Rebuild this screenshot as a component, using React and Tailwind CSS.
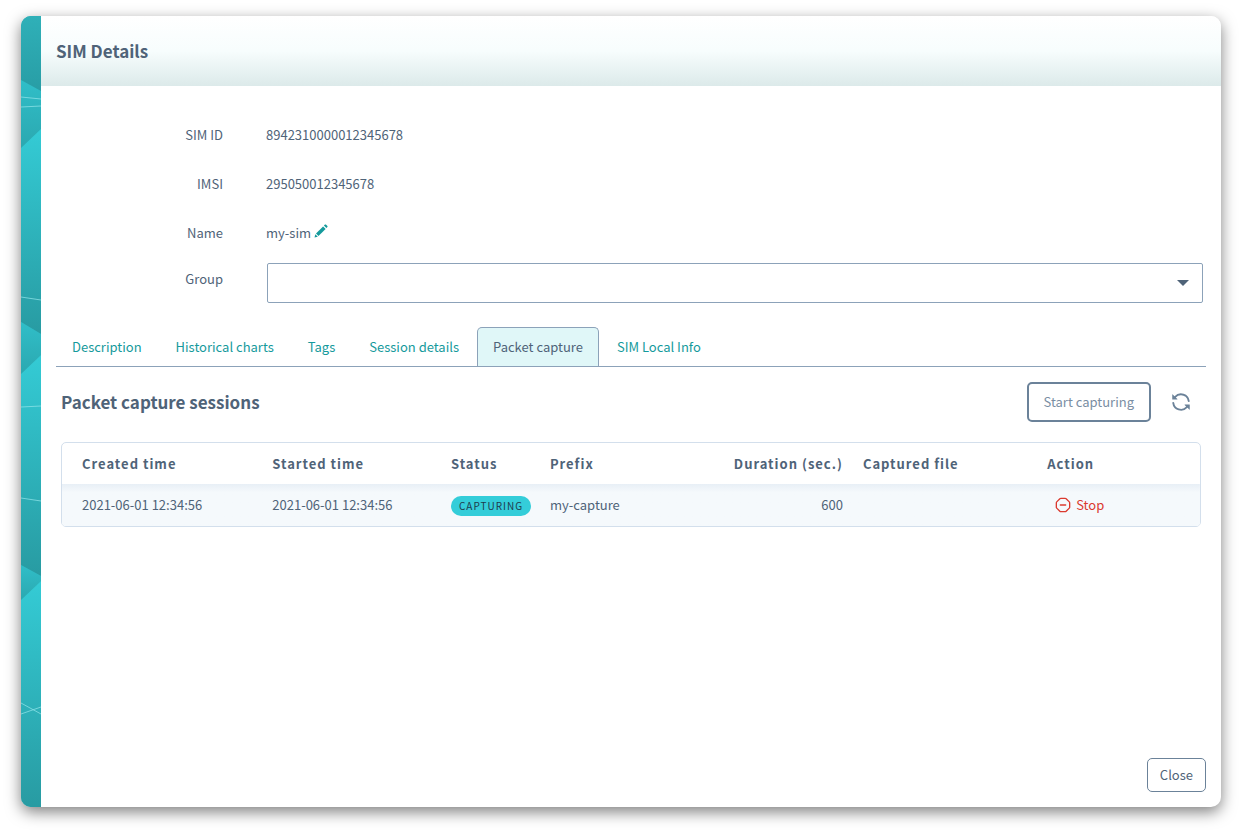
import { OctagonMinus } from "lucide-react";

const tabs = [
    "Description",
    "Historical charts",
    "Tags",
    "Session details",
    "Packet capture",
    "SIM Local Info",
];

const sessions = [
    {
        created: "2021-06-01 12:34:56",
        started: "2021-06-01 12:34:56",
        status: "CAPTURING",
        prefix: "my-capture",
        duration: 600,
        file: "",
    },
];

// Decorative faceted strip on the left edge of the dialog
function SideStrip() {
    return (
        <div className="w-5 shrink-0 bg-[#2ba8b0]">
            <svg className="block h-full w-5" viewBox="0 0 20 791" preserveAspectRatio="none" aria-hidden="true">
                <defs>
                    <linearGradient id="top" x1="0" y1="0" x2="0" y2="1">
                        <stop offset="0" stopColor="#2fb0b8" />
                        <stop offset="1" stopColor="#289da5" />
                    </linearGradient>
                    <linearGradient id="mid" x1="0" y1="0" x2="0" y2="1">
                        <stop offset="0" stopColor="#30bec8" />
                        <stop offset="1" stopColor="#2ba8b0" />
                    </linearGradient>
                    <linearGradient id="bright" x1="0" y1="0" x2="0" y2="1">
                        <stop offset="0" stopColor="#34cbd5" />
                        <stop offset="1" stopColor="#289ba2" />
                    </linearGradient>
                </defs>
                <path d="M0 0H20V76H0Z" fill="url(#top)" />
                <path d="M0 64L20 75V114L0 132Z" fill="url(#mid)" />
                <path d="M0 132L20 113V318L0 306Z" fill="url(#bright)" />
                <path d="M0 306L20 318V339L0 358Z" fill="url(#mid)" />
                <path d="M0 358L20 339V560L0 549Z" fill="url(#bright)" />
                <path d="M0 549L20 560V565L0 584Z" fill="url(#mid)" />
                <path d="M0 584L20 565V791H0Z" fill="url(#bright)" />
                <g stroke="#8fe3e8" strokeOpacity="0.75" fill="none">
                    <path d="M0 81L20 83M0 91L20 90" />
                    <path d="M0 281L20 284M0 391L20 390" />
                    <path d="M0 482L20 485" />
                    <path d="M0 687L20 698M0 698L20 691" />
                </g>
            </svg>
        </div>
    );
}

function PencilIcon() {
    return (
        <svg className="h-3.5 w-3.5" viewBox="0 0 14 14" fill="#159a9c" aria-hidden="true">
            <path d="M0.5 13.5L1.3 10.2L3.8 12.7Z" />
            <path d="M2 9.5L9.1 2.4L11.6 4.9L4.5 12Z" />
            <path d="M9.9 1.6L11 0.6Q11.4 0.2 11.9 0.6L13.4 2.1Q13.8 2.6 13.4 3.1L12.4 4.1Z" />
        </svg>
    );
}

function SyncIcon() {
    return (
        <svg className="h-5 w-5" viewBox="0 0 16 16" fill="currentColor" aria-hidden="true">
            <path d="M1.705 8.005a.75.75 0 0 1 .834.656 5.5 5.5 0 0 0 9.592 2.97l-1.204-1.204a.25.25 0 0 1 .177-.427h3.646a.25.25 0 0 1 .25.25v3.646a.25.25 0 0 1-.427.177l-1.38-1.38A7.002 7.002 0 0 1 1.05 8.84a.75.75 0 0 1 .656-.834ZM8 2.5a5.487 5.487 0 0 0-4.131 1.869l1.204 1.204A.25.25 0 0 1 4.896 6H1.25A.25.25 0 0 1 1 5.75V2.104a.25.25 0 0 1 .427-.177l1.38 1.38A7.002 7.002 0 0 1 14.95 7.16a.75.75 0 0 1-1.49.178A5.5 5.5 0 0 0 8 2.5Z" />
        </svg>
    );
}

function FormRow({ label, children }) {
    return (
        <div className="flex h-[49px] items-center">
            <span className="w-[167px] shrink-0 text-right">{label}</span>
            <div className="ml-[43px] flex items-center gap-[3px]">{children}</div>
        </div>
    );
}

export default function App() {
    return (
        <div className="flex min-h-screen bg-white px-[21px] pt-4 pb-[26px] font-['Noto_Sans_CJK_JP',sans-serif] text-[13px] leading-5 text-[#4f6378]">
            <div
                role="dialog"
                aria-labelledby="dialog-title"
                className="flex flex-1 overflow-hidden rounded-[10px] bg-white shadow-[0_5px_15px_rgba(0,0,0,0.5)]"
            >
                <SideStrip />

                <div className="flex min-w-0 flex-1 flex-col">
                    <header className="flex h-[70px] items-center bg-linear-to-b from-white via-[#f7fdfd] to-[#dceaea] px-[15px]">
                        <h1 id="dialog-title" className="text-[17px] leading-6 font-bold">SIM Details</h1>
                    </header>

                    <div className="flex flex-1 flex-col p-[15px] pt-6">
                        {/* SIM summary */}
                        <FormRow label="SIM ID">8942310000012345678</FormRow>
                        <FormRow label="IMSI">295050012345678</FormRow>
                        <FormRow label="Name">
                            my-sim
                            <button type="button" aria-label="Edit name" className="mb-1">
                                <PencilIcon />
                            </button>
                        </FormRow>
                        <div className="mt-1.5 flex">
                            <label htmlFor="group" className="w-[167px] shrink-0 pt-1.5 text-right">Group</label>
                            <div className="relative mr-[3px] ml-11 flex-1">
                                <select
                                    id="group"
                                    className="block h-10 w-full appearance-none rounded-xs border border-[#8ca2b9] bg-white px-3"
                                >
                                    <option value=""></option>
                                </select>
                                <svg
                                    className="pointer-events-none absolute top-[17px] right-3.5 h-1.5 w-3"
                                    viewBox="0 0 12 6"
                                    fill="#4f6378"
                                    aria-hidden="true"
                                >
                                    <path d="M0 0H12L6 6Z" />
                                </svg>
                            </div>
                        </div>

                        {/* Tabs */}
                        <nav className="mt-6 flex gap-0.5 border-b border-[#8ca2b9]">
                            {tabs.map((tab) => (
                                <a
                                    key={tab}
                                    href="#"
                                    className={
                                        tab === "Packet capture"
                                            ? "rounded-t-[5px] border border-b-0 border-[#8ca2b9] bg-[#e0f7f8] px-[15px] py-[9px]"
                                            : "border border-b-0 border-transparent px-[15px] py-[9px] text-[#159a9c]"
                                    }
                                >
                                    {tab}
                                </a>
                            ))}
                        </nav>

                        {/* Capture sessions */}
                        <section className="px-[5px] pt-[15px]">
                            <div className="flex items-center">
                                <h2 className="flex-1 text-[17px] leading-6 font-bold">Packet capture sessions</h2>
                                <button
                                    type="button"
                                    className="h-10 rounded-[5px] border-2 border-[#6b8299] px-[15px] text-[#7a8ea3]"
                                >
                                    Start capturing
                                </button>
                                <button type="button" aria-label="Refresh" className="mr-2.5 ml-5 text-[#6b8299]">
                                    <SyncIcon />
                                </button>
                            </div>

                            <div className="mt-5 overflow-hidden rounded-[5px] border border-[#d3dfec]">
                                <table className="w-full table-fixed text-left">
                                    <thead>
                                        <tr className="h-[41px] tracking-[1px]">
                                            <th className="w-[17.6%] pr-2.5 pl-5">Created time</th>
                                            <th className="w-[15.7%] px-2.5">Started time</th>
                                            <th className="w-[8.7%] px-2.5">Status</th>
                                            <th className="w-[15%] px-2.5">Prefix</th>
                                            <th className="w-[12.5%] px-2.5 text-right whitespace-nowrap">Duration (sec.)</th>
                                            <th className="w-[16.2%] px-2.5">Captured file</th>
                                            <th className="px-2.5">Action</th>
                                        </tr>
                                    </thead>
                                    <tbody>
                                        {sessions.map((session) => (
                                            <tr
                                                key={session.created}
                                                className="h-[42px] bg-[#f5f9fc] bg-linear-to-b from-[#e8eff6] to-[#f5f9fc] to-20%"
                                            >
                                                <td className="pr-2.5 pl-5">{session.created}</td>
                                                <td className="px-2.5">{session.started}</td>
                                                <td className="px-2.5">
                                                    <span className="inline-block rounded-full bg-[#34cdd9] px-2 align-middle text-[10px] tracking-[1px] text-[#1f3b4d]">
                                                        {session.status}
                                                    </span>
                                                </td>
                                                <td className="px-2.5">{session.prefix}</td>
                                                <td className="px-2.5 text-right">{session.duration}</td>
                                                <td className="px-2.5">{session.file}</td>
                                                <td className="px-2.5">
                                                    <button type="button" className="ml-2 flex items-center gap-[5px] text-[#db3a2f]">
                                                        <OctagonMinus size={16} />
                                                        Stop
                                                    </button>
                                                </td>
                                            </tr>
                                        ))}
                                    </tbody>
                                </table>
                            </div>
                        </section>

                        <footer className="mt-auto flex justify-end">
                            <button type="button" className="h-[34px] rounded-[5px] border border-[#6b8299] px-3">
                                Close
                            </button>
                        </footer>
                    </div>
                </div>
            </div>
        </div>
    );
}
